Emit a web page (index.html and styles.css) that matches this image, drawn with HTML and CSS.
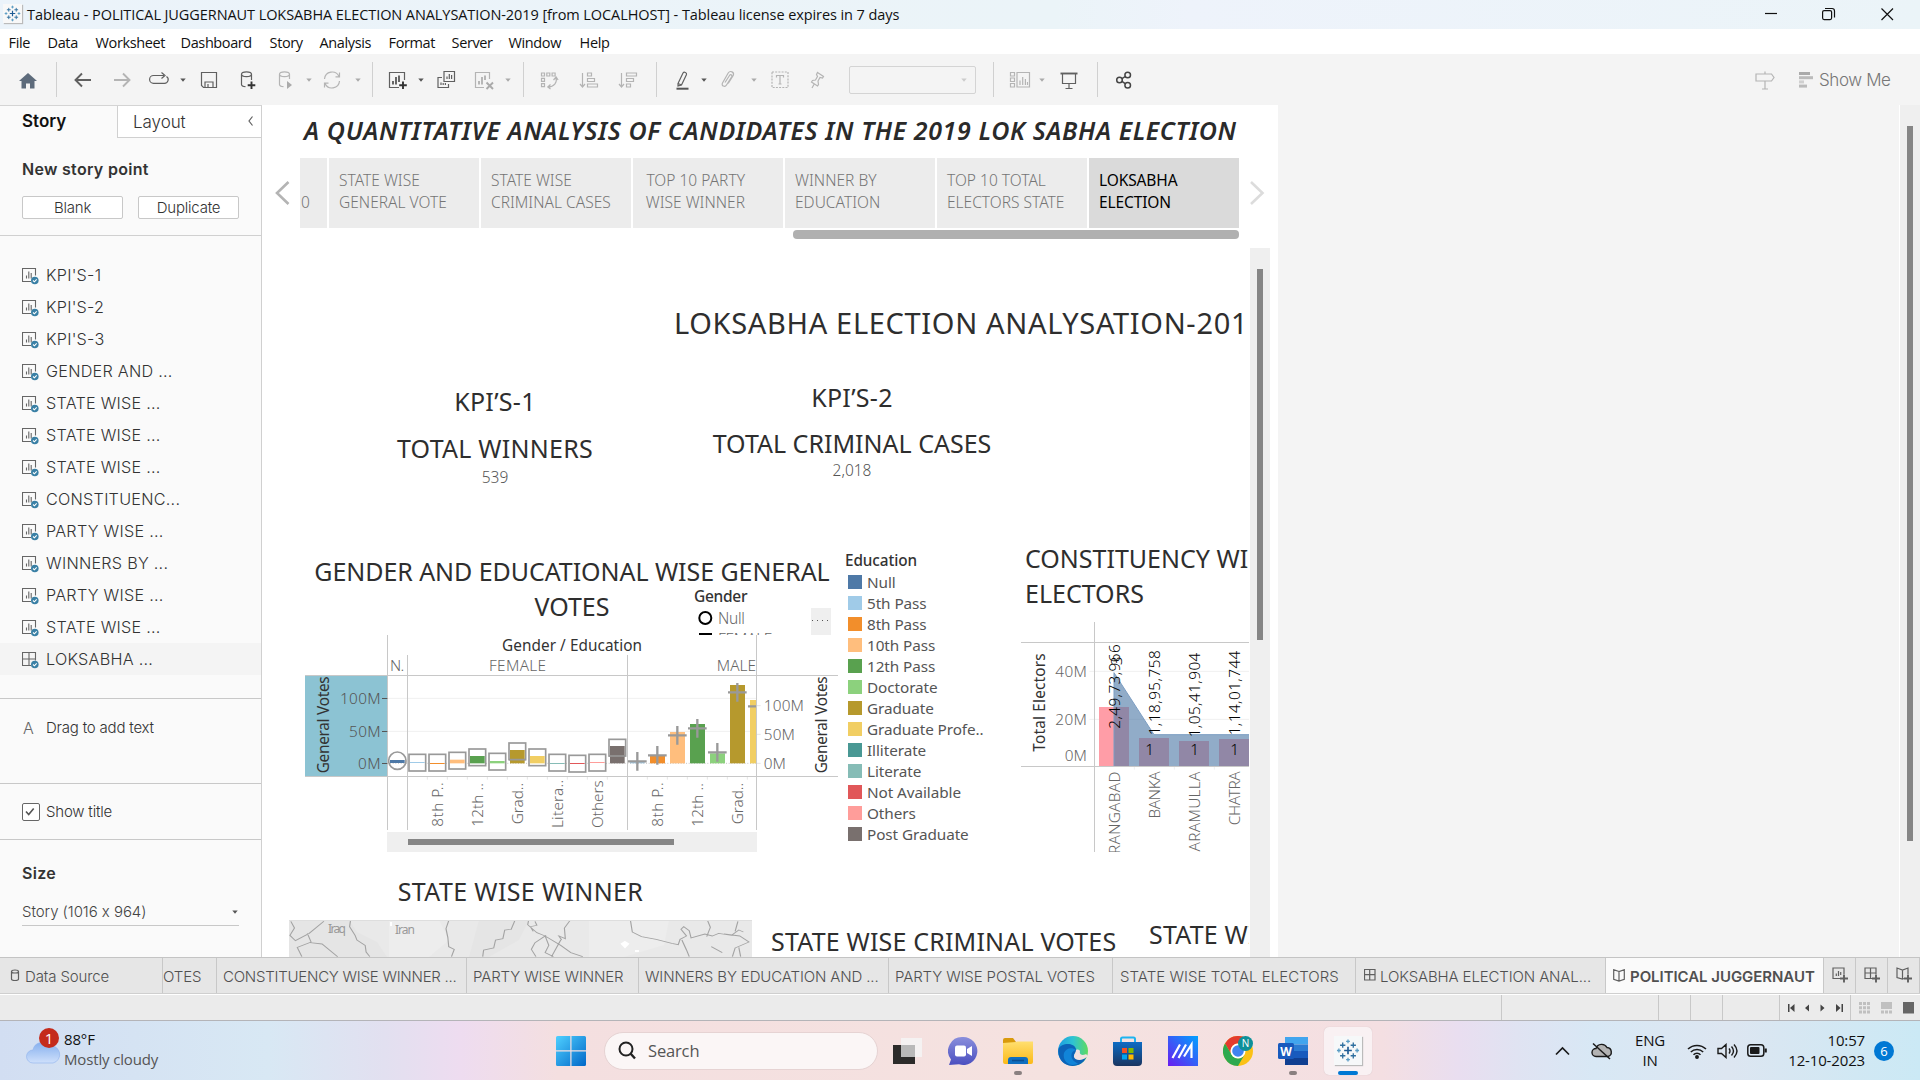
FILE: index.html
```html
<!DOCTYPE html>
<html lang="en">
<head>
<meta charset="utf-8">
<title>Tableau - POLITICAL JUGGERNAUT</title>
<link rel="stylesheet" href="styles.css">
</head>
<body>
<svg class="defs" width="0" height="0">
  <defs>
    <symbol id="tableau" viewBox="0 0 20 20">
      <g fill="none" stroke="#2f6f9f" stroke-width="1.1">
        <path d="M10 6.8v6.4M6.8 10h6.4" stroke="#1f5b94" stroke-width="1.4"/>
        <path d="M5.6 3.4v4.4M3.4 5.6h4.4M14.4 3.4v4.4M12.2 5.6h4.4M5.6 12.2v4.4M3.4 14.4h4.4M14.4 12.2v4.4M12.2 14.4h4.4"/>
        <path d="M10 .8v3.2M8.4 2.4h3.2M10 16v3.2M8.4 17.6h3.2M2.4 8.4v3.2M.8 10h3.2M17.6 8.4v3.2M16 10h3.2" stroke="#5a9cc4"/>
      </g>
    </symbol>
    <symbol id="sheet" viewBox="0 0 18 18">
      <path d="M9 13.5H.5V.5h13v7" fill="none" stroke="#666" stroke-width="1.1"/>
      <path d="M4.5 10.500V7.500M6.800 10.500V3.500M9.200 10.500V5" stroke="#666" stroke-width="1.100"/>
      <circle cx="12.800" cy="12.500" r="3.800" fill="#3a80a5"/>
      <path d="M11 12.500l1.400 1.300 2.300-2.500" fill="none" stroke="#fff" stroke-width="1.100"/>
    </symbol>
    <symbol id="board" viewBox="0 0 18 18">
      <path d="M9 13.500H.5V.5h13v8M.5 7h13M7 .5v13" fill="none" stroke="#666" stroke-width="1.100"/>
      <circle cx="12.800" cy="12.500" r="3.800" fill="#3a80a5"/>
      <path d="M11 12.500l1.400 1.300 2.300-2.500" fill="none" stroke="#fff" stroke-width="1.100"/>
    </symbol>
    <symbol id="caret" viewBox="0 0 8 24"><path d="M1.300 10.600h5.400L4 13.800z" fill="currentColor"/></symbol>
    <linearGradient id="gStart" x1="0" y1="0" x2="1" y2="1"><stop offset="0" stop-color="#4fd0ff"/><stop offset="1" stop-color="#0067c8"/></linearGradient>
    <linearGradient id="gCloud" x1="0" y1="0" x2="0" y2="1"><stop offset="0" stop-color="#86b0ee"/><stop offset="1" stop-color="#cfe0fb"/></linearGradient>
    <linearGradient id="gChat" x1="0" y1="0" x2="0" y2="1"><stop offset="0" stop-color="#8a8fdc"/><stop offset="1" stop-color="#4b4fc0"/></linearGradient>
    <linearGradient id="gFold" x1="0" y1="0" x2="0" y2="1"><stop offset="0" stop-color="#ffdf70"/><stop offset="1" stop-color="#fbb917"/></linearGradient>
    <linearGradient id="gEdge" x1="0" y1="0" x2="1" y2="0"><stop offset="0" stop-color="#1b9de2"/><stop offset=".5" stop-color="#2fc3d2"/><stop offset="1" stop-color="#5edb60"/></linearGradient>
    <linearGradient id="gAsus" x1="1" y1="0" x2="0" y2="1"><stop offset="0" stop-color="#00a2ff"/><stop offset="1" stop-color="#6a1cf0"/></linearGradient>
    <linearGradient id="gStore" x1="0" y1="0" x2="0" y2="1"><stop offset="0" stop-color="#0d6cc4"/><stop offset="1" stop-color="#1a3560"/></linearGradient>
  </defs>
</svg>

<header class="titlebar">
  <span class="app-icon"><svg width="17" height="17"><use href="#tableau"/></svg></span>
  <span class="app-title">Tableau - POLITICAL JUGGERNAUT LOKSABHA ELECTION ANALYSATION-2019 [from LOCALHOST] - Tableau license expires in 7 days</span>
  <svg class="win-btns" width="134" height="29" fill="none" stroke="#111" stroke-width="1.200">
    <path d="M1 13.500h12"/>
    <rect x="58.600" y="10.600" width="9" height="9" rx="1.500"/><path d="M61 8.500h7a2.500 2.500 0 0 1 2.500 2.500v6.500"/>
    <path d="M117.500 8.500l11.500 11.500M129 8.500L117.500 20"/>
  </svg>
</header>

<nav class="menubar">
  <span>File</span><span>Data</span><span>Worksheet</span><span>Dashboard</span><span>Story</span><span>Analysis</span><span>Format</span><span>Server</span><span>Window</span><span>Help</span>
</nav>

<div class="toolbar">
  <svg class="ic" viewBox="0 0 24 24"><path d="M12 5l9 8h-2.500v7.500h-4.500v-5h-4v5H5.500V13H3z" fill="#5d6b7b"/></svg>
  <i class="sep"></i>
  <svg class="ic" viewBox="0 0 24 24"><path d="M20 12H5M11 5.500L4.500 12l6.500 6.500" class="d2"/></svg>
  <svg class="ic" viewBox="0 0 24 24"><path d="M4 12h15M13 5.500l6.500 6.500-6.500 6.500" class="l2"/></svg>
  <svg class="ic" viewBox="0 0 24 24"><path d="M9 7.500H6.500a3.700 3.700 0 0 0 0 7.800h11a3.700 3.700 0 0 0 2-6.800M9 7.500h8M14.500 4.500l3.500 3-3.500 3" class="d"/></svg>
  <svg class="ct dark"><use href="#caret"/></svg>
  <svg class="ic" viewBox="0 0 24 24"><path d="M4.500 4.500h15v15h-13l-2-2zM8 19.500V14h8v5.500M11 16v3.500" class="d"/></svg>
  <svg class="ic" viewBox="0 0 24 24"><path d="M5.500 6.500v10c0 1.200 1.500 2 4 2.200M15.500 6.500v5.500" class="d"/><ellipse cx="10.500" cy="6.200" rx="5" ry="2.400" class="d"/><path d="M15.500 13.500v7.500M11.700 17.200h7.600" stroke="#333" stroke-width="1.900"/></svg>
  <svg class="ic" viewBox="0 0 24 24"><path d="M5.500 6.500v10c0 1.200 1.500 2 4 2.200M15.500 6.500v4.500" class="l"/><ellipse cx="10.500" cy="6.200" rx="5" ry="2.400" class="l"/><path d="M13 13l5 4-5 4z" fill="#aaa"/></svg>
  <svg class="ct"><use href="#caret"/></svg>
  <svg class="ic" viewBox="0 0 24 24"><path d="M4.500 11A7.600 7.600 0 0 1 19 8.500M19.500 13A7.600 7.600 0 0 1 5 15.500M19.500 4.500v4.300h-4M4.500 19.500v-4.300h4" class="l"/></svg>
  <svg class="ct"><use href="#caret"/></svg>
  <i class="sep"></i>
  <svg class="ic" viewBox="0 0 24 24"><path d="M13 19.500H3.500v-15h15V12" class="d"/><path d="M7 16.500V13M10 16.500V9M13 14V7.500" class="d2"/><path d="M17 13.500V21M13.200 17.200h7.600" stroke="#333" stroke-width="1.900"/></svg>
  <svg class="ct dark"><use href="#caret"/></svg>
  <svg class="ic" viewBox="0 0 24 24"><path d="M10 3.500h10.500v10H10zM8 9.500H4v10h10.500V16M13 11V8.500M15.300 11V6M17.600 11V7M7 17v-2.500M9.200 17v-2M11.400 17v-2" class="d"/></svg>
  <svg class="ic" viewBox="0 0 24 24"><path d="M11 19.500H2.500v-15h14V11" class="l"/><path d="M6 16.500V13M9 16.500V9M12 12V7.500" class="l2"/><path d="M13.500 14.500l6.500 6.500M20 14.500L13.500 21" stroke="#aaa" stroke-width="1.900"/></svg>
  <svg class="ct"><use href="#caret"/></svg>
  <i class="sep"></i>
  <svg class="ic" viewBox="0 0 24 24"><path d="M4.500 5h3v3h-3zM9.800 5h3v3h-3zM15.100 5h3v3h-3zM4.500 10.300h3v3h-3zM4.500 15.600h3v3h-3zM19 9.500c1.500 5-2 9.500-8 9.500M16.500 12l2.600-3 2 3M13.500 16.500L10.800 19l2.700 2" class="l"/></svg>
  <svg class="ic" viewBox="0 0 24 24"><path d="M5.500 5v14M3 16l2.500 3L8 16M10.500 5h4v3h-4zM10.500 10.500h7v3h-7zM10.500 16h10v3h-10z" class="l"/></svg>
  <svg class="ic" viewBox="0 0 24 24"><path d="M5.500 5v14M3 16l2.500 3L8 16M10.500 5h10v3h-10zM10.500 10.500h7v3h-7zM10.500 16h4v3h-4z" class="l"/></svg>
  <i class="sep"></i>
  <svg class="ic" viewBox="0 0 24 24"><path d="M7 15.500l5-10.500c1-1.500 4-.5 3.500 1.500l-5 10.500-3.500 1zM7 15.500l3.500 1.500" class="d"/><path d="M5.500 20.700h12" stroke="#555" stroke-width="2"/></svg>
  <svg class="ct dark"><use href="#caret"/></svg>
  <svg class="ic" viewBox="0 0 24 24"><path d="M9 14.500l4.500-7c1-1.500 3-.5 2.200 1.200l-5.200 8.300c-1.500 2.500-5.500 1-4-2L12.200 5c2-3 6.500-.8 5 2.500l-5 8" class="l"/></svg>
  <svg class="ct"><use href="#caret"/></svg>
  <svg class="ic" viewBox="0 0 24 24"><path d="M4 4h16v15.500H4z" class="l" stroke-dasharray="2 1.200"/><path d="M8.500 9.500v-2h7v2M12 7.500v8.500M10.500 16h3" class="l"/></svg>
  <svg class="ic" viewBox="0 0 24 24"><path d="M12.500 4.500l6 4-1 1.500-2.500-.5-2 3.500.5 3.500-1 1.500-6-4 1-1.500 3-.5 2-3.500-1-2zM9.500 15.500L7 20" class="l"/></svg>
  <span class="combo"><svg width="8" height="24"><use href="#caret"/></svg></span>
  <i class="sep"></i>
  <svg class="ic" viewBox="0 0 24 24"><path d="M2.500 4.500h4v3.500h-4zM2.500 10h4v3.500h-4zM2.500 15.500h4v3.500h-4zM9 4.500h12.500v14.500H9zM12 17v-4.500M14.700 17V9M17.400 17v-6M19.500 17v-3" class="l"/></svg>
  <svg class="ct"><use href="#caret"/></svg>
  <svg class="ic" viewBox="0 0 24 24"><path d="M3.500 5.500h17" class="d2"/><path d="M5.500 6v9.500h13V6M12 15.500v4.500M8.500 20.500h7" class="d"/></svg>
  <i class="sep"></i>
  <svg class="ic" viewBox="0 0 24 24"><g class="k"><circle cx="7.500" cy="12" r="2.800"/><circle cx="15.700" cy="7" r="2.800"/><circle cx="15.700" cy="17.200" r="2.800"/><path d="M10 10.700l3.200-2.200M10 13.400l3.200 2.200"/></g></svg>
  <svg class="ic" viewBox="0 0 24 24"><path d="M3 6h15.500l2.500 3.500-2.500 3.500H3zM12 3.500V6M12 13v8M9 21h6" class="l"/></svg>
  <span class="showme"><svg width="15" height="16"><path d="M0 0h11v3H0z" fill="#aaa"/><path d="M0 4.200h14v3H0z" fill="#bbb"/><path d="M0 8.400h5v3H0z" fill="#d0d0d0"/><path d="M0 12.600h8v3H0z" fill="#bbb"/></svg>Show Me</span>
</div>

<main class="workspace">
  <aside class="sidebar">
    <div class="side-tabs"><b>Story</b><span>Layout<svg width="8" height="12"><path d="M5.500 1.500L2 6l3.500 4.500" class="d"/></svg></span></div>
    <section class="new-point">
      <h2>New story point</h2>
      <div class="btns"><button>Blank</button><button>Duplicate</button></div>
    </section>
    <ul class="sheets">
      <li><svg><use href="#sheet"/></svg>KPI'S-1</li>
      <li><svg><use href="#sheet"/></svg>KPI'S-2</li>
      <li><svg><use href="#sheet"/></svg>KPI'S-3</li>
      <li><svg><use href="#sheet"/></svg>GENDER AND ...</li>
      <li><svg><use href="#sheet"/></svg>STATE WISE ...</li>
      <li><svg><use href="#sheet"/></svg>STATE WISE ...</li>
      <li><svg><use href="#sheet"/></svg>STATE WISE ...</li>
      <li><svg><use href="#sheet"/></svg>CONSTITUENC...</li>
      <li><svg><use href="#sheet"/></svg>PARTY WISE ...</li>
      <li><svg><use href="#sheet"/></svg>WINNERS BY ...</li>
      <li><svg><use href="#sheet"/></svg>PARTY WISE ...</li>
      <li><svg><use href="#sheet"/></svg>STATE WISE ...</li>
      <li class="sel"><svg><use href="#board"/></svg>LOKSABHA ...</li>
    </ul>
    <div class="drag"><em>A</em>Drag to add text</div>
    <div class="show-title"><svg width="18" height="18"><rect x=".5" y=".5" width="17" height="17" rx="1.500" fill="#fff" stroke="#666"/><path d="M4 8.500l2.700 3 5-6" fill="none" stroke="#555" stroke-width="1.600"/></svg>Show title</div>
    <div class="size"><h2>Size</h2><div class="select">Story (1016 x 964)<svg width="8" height="24"><use href="#caret"/></svg></div></div>
  </aside>

  <section class="story">
    <h1>A QUANTITATIVE ANALYSIS OF CANDIDATES IN THE 2019 LOK SABHA ELECTION</h1>
    <div class="navigator">
      <svg class="arrow" width="18" height="26"><path d="M14.500 2L3 13l11.500 11" fill="none" stroke="#b4b4b4" stroke-width="2.600"/></svg>
      <div class="strip">
        <div class="points">
          <div class="pt cut"><br>10</div>
          <div class="pt">STATE WISE<br>GENERAL VOTE</div>
          <div class="pt">STATE WISE<br>CRIMINAL CASES</div>
          <div class="pt mid"><span>TOP 10 PARTY<br>WISE WINNER</span></div>
          <div class="pt">WINNER BY<br>EDUCATION</div>
          <div class="pt">TOP 10 TOTAL<br>ELECTORS STATE</div>
          <div class="pt on">LOKSABHA<br>ELECTION</div>
        </div>
        <div class="hbar"></div>
      </div>
      <svg class="arrow" width="18" height="26"><path d="M3 2l11.500 11L3 24" fill="none" stroke="#dcdcdc" stroke-width="2.600"/></svg>
    </div>

    <div class="viewport">
      <div class="dash">
        <h2 class="dash-title">LOKSABHA ELECTION ANALYSATION-2019</h2>
        <div class="kpis">
          <div class="kpi one"><h3>KPI’S-1</h3><h3 class="w">TOTAL WINNERS</h3><p>539</p></div>
          <div class="kpi two"><h3>KPI’S-2</h3><h3>TOTAL CRIMINAL CASES</h3><p>2,018</p></div>
        </div>
        <div class="charts">
          <div class="gender">
            <h3>GENDER AND EDUCATIONAL WISE GENERAL<br>VOTES</h3>
            <div class="shape-legend">
              <b>Gender</b>
              <div><svg width="24" height="21"><circle cx="11.300" cy="10" r="6" fill="none" stroke="#000" stroke-width="2"/></svg>Null</div>
              <div><svg width="24" height="21"><rect x="6" y="5" width="11" height="11" fill="none" stroke="#000" stroke-width="2"/></svg>FEMALE</div>
              <i></i>
            </div>
            <svg class="chart" width="534" height="217" viewBox="42 285 1602 651">
              <rect x="45" y="408" width="247" height="300" fill="#8cc3d3"/>
              <path d="M292 475H1400M292 574H1400" stroke="#f0f0f0" stroke-width="3"/>
              <path d="M292 670H1400" stroke="#c8c8c8" stroke-width="3" stroke-dasharray="3 5"/>
              <path d="M412 710v9M472 710v9M532 710v9M592 710v9M652 710v9M712 710v9M772 710v9M832 710v9M892 710v9M952 710v9M1072 710v9M1132 710v9M1192 710v9M1252 710v9M1312 710v9M1372 710v9M1400 497h12M1400 583h12M1400 670h12" stroke="#e6e6e6" stroke-width="3"/>
              <rect x="300" y="660" width="44" height="9" fill="#4e79a7"/>
              <g fill="none" stroke="#999" stroke-width="5">
                <g fill="#fff"><rect x="357" y="643" width="50" height="50"/><rect x="417" y="643" width="50" height="50"/><rect x="477" y="637" width="50" height="50"/><rect x="537" y="627" width="50" height="50"/><rect x="597" y="640" width="50" height="50"/><rect x="657" y="609" width="50" height="50"/><rect x="717" y="627" width="50" height="50"/><rect x="777" y="643" width="50" height="50"/><rect x="837" y="646" width="50" height="50"/><rect x="897" y="643" width="50" height="50"/><rect x="957" y="598" width="50" height="50"/></g>
              </g>
              <rect x="360" y="666" width="44" height="3" fill="#a0cbe8"/><rect x="420" y="669" width="44" height="3" fill="#f28e2b"/><rect x="480" y="659" width="44" height="11" fill="#ffbe7d"/><rect x="540" y="648" width="44" height="22" fill="#59a14f"/><rect x="600" y="663" width="44" height="7" fill="#8cd17d"/><rect x="660" y="630" width="44" height="40" fill="#b6992d"/><rect x="720" y="648" width="44" height="22" fill="#f1ce63"/><rect x="780" y="669" width="44" height="3" fill="#86bcb6"/><rect x="840" y="669" width="44" height="3" fill="#e15759"/><rect x="900" y="666" width="44" height="3" fill="#ff9d9a"/><rect x="960" y="618" width="44" height="52" fill="#79706e"/>
              <path d="M1020 664h44v6h-44z" fill="#a0cbe8"/><rect x="1080" y="648" width="45" height="22" fill="#f28e2b"/><rect x="1140" y="576" width="45" height="94" fill="#ffbe7d"/><rect x="1200" y="552" width="45" height="118" fill="#59a14f"/><rect x="1260" y="640" width="45" height="30" fill="#8cd17d"/><rect x="1320" y="435" width="45" height="235" fill="#b6992d"/><rect x="1380" y="480" width="20" height="190" fill="#f1ce63"/>
              <g fill="none" stroke="#999" stroke-width="5">
                <circle cx="322" cy="662" r="26"/><path d="M657 659h50M957 648h50"/>
                <path stroke-width="7" d="M1014 664h56M1042 636v56M1074 646h56M1102 618v56M1134 586h56M1162 558v56M1194 565h56M1222 537v56M1254 637h56M1282 609v56M1314 457h56M1342 429v56M1374 499h26"/>
              </g>
              <path d="M45 406.500H1644M45 709.500H1644M292.500 285V870M352.500 345V870M1012.500 345V870M1399.500 285V870" stroke="#c8c8c8" stroke-width="3"/>
              <path d="M276 475.500h16M276 574.500h16M276 670.500h16" stroke="#555" stroke-width="3"/>
              <g class="axis" text-anchor="end"><text x="271" y="492" fill="#555" textLength="121">100M</text><text x="271" y="590" fill="#555" textLength="94">50M</text><text x="271" y="687" fill="#555" textLength="67">0M</text></g>
              <g class="axis"><text x="1421" y="514" textLength="120">100M</text><text x="1421" y="600" textLength="93">50M</text><text x="1421" y="687" textLength="66">0M</text>
                <text x="300" y="393" textLength="42">N.</text><text x="597" y="393" textLength="170">FEMALE</text><text x="1280" y="393" textLength="117">MALE</text></g>
              <text class="field" x="636" y="333" textLength="420">Gender / Education</text>
              <text class="axis dk" transform="translate(118 700) rotate(-90)" textLength="290">General Votes</text>
              <text class="axis dk" transform="translate(1610 700) rotate(-90)" textLength="290">General Votes</text>
              <g class="axis">
                <text transform="translate(460 860) rotate(-90)" textLength="132">8th P..</text><text transform="translate(580 860) rotate(-90)" textLength="130">12th ..</text><text transform="translate(700 853) rotate(-90)" textLength="124">Grad..</text><text transform="translate(820 864) rotate(-90)" textLength="144">Litera..</text><text transform="translate(940 864) rotate(-90)" textLength="142">Others</text><text transform="translate(1120 860) rotate(-90)" textLength="132">8th P..</text><text transform="translate(1240 860) rotate(-90)" textLength="130">12th ..</text><text transform="translate(1360 853) rotate(-90)" textLength="124">Grad..</text>
              </g>
              <rect x="291" y="876" width="1110" height="60" fill="#efefef"/><rect x="354" y="897" width="798" height="18" fill="#868686"/>
            </svg>
          </div>
          <ul class="legend">
            <li class="head">Education</li>
            <li><i class="c1"></i>Null</li><li><i class="c2"></i>5th Pass</li><li><i class="c3"></i>8th Pass</li><li><i class="c4"></i>10th Pass</li><li><i class="c5"></i>12th Pass</li><li><i class="c6"></i>Doctorate</li><li><i class="c7"></i>Graduate</li><li><i class="c8"></i>Graduate Profe..</li><li><i class="c9"></i>Illiterate</li><li><i class="c10"></i>Literate</li><li><i class="c11"></i>Not Available</li><li><i class="c12"></i>Others</li><li><i class="c13"></i>Post Graduate</li>
          </ul>
          <div class="constituency">
            <h3>CONSTITUENCY WISE<br>ELECTORS</h3>
            <svg class="chart" width="228" height="230" viewBox="63 276 684 690">
              <path d="M268 424H747M268 568H747M403 710v9M523 710v9M643 710v9" stroke="#f0f0f0" stroke-width="3"/>
              <path d="M297 531h90v177h-90zM417 624h90v84h-90zM537 633h90v75h-90zM657 627h90v81h-90z" fill="#ff9da7"/>
              <path d="M342 428L462 614H747V708H342z" fill="#4e79a7" fill-opacity=".62"/>
              <path d="M342 708V428L462 614H747" fill="none" stroke="#7b9dc2" stroke-width="3"/>
              <path d="M63 337.500H747M63 709.500H747M283.500 276V966" stroke="#c8c8c8" stroke-width="3"/>
              <g class="axis" text-anchor="end"><text x="260" y="441" textLength="94">40M</text><text x="260" y="585" textLength="94">20M</text><text x="260" y="693" textLength="66">0M</text></g>
              <text class="axis dk" transform="translate(135 665) rotate(-90)" textLength="294">Total Electors</text>
              <g class="axis bk">
                <text transform="translate(359 596) rotate(-90)" textLength="253">2,49,73,966</text><text transform="translate(367 406) rotate(-90)">3</text>
                <text transform="translate(479 616) rotate(-90)" textLength="255">1,18,95,758</text><text transform="translate(599 622) rotate(-90)" textLength="254">1,05,41,904</text><text transform="translate(719 616) rotate(-90)" textLength="254">1,14,01,744</text>
                <text x="436" y="676">1</text><text x="571" y="676">1</text><text x="691" y="676">1</text>
              </g>
              <g class="axis" text-anchor="end"><text class="wide" transform="translate(359 724) rotate(-90)">AURANGABAD</text><text transform="translate(479 725) rotate(-90)">BANKA</text><text class="wide" transform="translate(599 724) rotate(-90)">BARAMULLA</text><text transform="translate(719 725) rotate(-90)">CHATRA</text></g>
            </svg>
          </div>
        </div>
        <div class="bottom">
          <div class="winner">
            <h3>STATE WISE WINNER</h3>
            <svg width="463" height="37" viewBox="0 0 463 37">
              <rect width="463" height="37" fill="#e9e9e9"/>
              <path d="M0 0h60l8 12 20 10 10 15H0zM190 0h50l-10 20-30 17h-20z" fill="#e5e5e5"/><path d="M100 0h50l10 20-20 17h-40zM300 0h80l-5 25-40 12h-35z" fill="#ededed"/>
              <g transform="scale(.459 .3333) translate(-20 -180)" fill="none" stroke="#a3a3a3" stroke-width="2.500">
                <path d="M24 184l8 20-10 22 12 16 30-22 32-36M60 220l8 26-30 16 10 28M66 248l26 4 34 38M154 182l-2 18 12 26 4 14 18 16 2 20 8 14M368 182l-6 24 4 26 2 28 12 8-6 22M512 182l-8 26-14 2-4 26-16 4-4 24-22 6-2 20M542 182l-2 12 20 24 18 10 34 28 22 22 26 12M556 184l4 12-14 4 6 14M632 182l-12 22 2 32-14-8 6 12M580 226l-24 22-8 20 10 22M578 228l8 28-8 22 18 12M612 240l-20 50M764 182l4 34 20 14 32 8 34 12 14 4 4-16 14-10-12-20 6-8 12 12 4 22 30-12 16 6 14-8 28 6 16-16 10 6M876 240l10 30 6 20M932 182l6 20-8 28M998 184l-6 30M968 222l34 6 20 18-30 18-6 26M940 260l24 18M1000 262l4 28"/>
              </g>
              <path d="M102 2v4M336 22l3 2-3 3-3-3zM346 31h4" fill="#fff" stroke="#fff" stroke-width="2"/>
              <text x="39" y="12.500" textLength="18">Iraq</text><text x="106" y="13.500" textLength="20">Iran</text>
              <path d="M0 .5h463" stroke="#dedede"/>
            </svg>
          </div>
          <h3 class="crim">STATE WISE CRIMINAL VOTES</h3>
          <h3 class="statew">STATE WISE</h3>
        </div>
      </div>
      <div class="vtrack"><i></i></div>
    </div>
  </section>
  <div class="blank"></div>
  <div class="vtrack outer"><i></i></div>
</main>

<div class="tabs">
  <div class="tab ds"><svg width="11" height="14"><path d="M1.500 3.500v7.500c0 2 7 2 7 0V3.500M1.500 3.500c0-2 7-2 7 0s-7 2-7 0" class="d"/></svg>Data Source</div>
  <div class="tab votes">OTES</div>
  <div class="tab w3">CONSTITUENCY WISE WINNER ...</div>
  <div class="tab w4">PARTY WISE WINNER</div>
  <div class="tab w5">WINNERS BY EDUCATION AND ...</div>
  <div class="tab w6">PARTY WISE POSTAL VOTES</div>
  <div class="tab w7">STATE WISE TOTAL ELECTORS</div>
  <div class="tab w8"><svg width="12" height="12"><path d="M.5 .5h10.500v10.500H.5zM.5 5.700h10.500M5.700 .5v10.500" class="d"/></svg>LOKSABHA ELECTION ANAL...</div>
  <div class="tab w9"><svg width="12" height="13"><path d="M6 2.500L.7 .7v9.500L6 12l5.300-1.800V.7zV12" class="d"/></svg>POLITICAL JUGGERNAUT</div>
  <div class="tab add"><svg width="17" height="16"><path d="M8 11.500H1V1h11v6M4.300 9V6.500M6.500 9V4M8.700 8V5" class="d"/><path d="M12 7.500v8M8 11.500h8" class="d2"/></svg></div>
  <div class="tab add"><svg width="17" height="16"><path d="M8 11.500H1V1h11v6M1 6h11M6.500 1v10.500" class="d"/><path d="M12 7.500v8M8 11.500h8" class="d2"/></svg></div>
  <div class="tab add"><svg width="17" height="16"><path d="M8 11.500L6.500 12 1 10.500V1l5.500 2L12 1v6M6.500 3v9" class="d"/><path d="M12 7.500v8M8 11.500h8" class="d2"/></svg></div>
</div>

<div class="status">
  <i class="s1"></i><i class="s2"></i><i class="s3"></i><i class="s3"></i><i class="s4"></i>
  <div class="pager"><svg width="60" height="10" fill="#444"><path d="M1 1h1.500v8H1zM7.500 1v8L3 5zM22 1.500v7L18 5zM33.500 1.500v7l4-3.500zM49 1v8l4.500-4zM54.500 1H56v8h-1.500z"/></svg></div>
  <svg width="56" height="12"><path d="M0 0h3v3H0zM4 0h3v3H4zM8 0h3v3H8zM0 4.300h3v3H0zM4 4.300h3v3H4zM8 4.300h3v3H8zM0 8.600h3v3H0zM4 8.600h3v3H4zM8 8.600h3v3H8zM22 0h11v7H22zM22 8.600h3v3h-3zM26 8.600h3v3h-3zM30 8.600h3v3h-3z" fill="#c0c0c0"/><path d="M44 0h11v11.500H44z" fill="#666"/></svg>
</div>

<footer class="taskbar">
  <div class="weather">
    <svg width="40" height="42"><circle cx="25" cy="22" r="5" fill="#f7830f"/><path d="M8 35a6.500 6.500 0 0 1 0-13 9 9 0 0 1 16-4 8.500 8.500 0 0 1 4 17z" fill="url(#gCloud)" stroke="#8fb2ec" stroke-width=".6"/><circle cx="24" cy="10" r="10" fill="#c42b1c"/><text x="24" y="15.500" text-anchor="middle" fill="#fff">1</text></svg>
    <p>88°F<br><span>Mostly cloudy</span></p>
  </div>
  <svg class="start" width="30" height="30"><path d="M0 1.500Q0 0 1.500 0H14.300V14.300H0zM15.500 0H28.500Q30 0 30 1.500V14.300H15.500zM0 15.500H14.300V30H1.500Q0 30 0 28.500zM15.500 15.500H30V28.500Q30 30 28.500 30H15.500z" fill="url(#gStart)"/></svg>
  <div class="search"><svg width="20" height="20"><circle cx="9" cy="8" r="6.500" fill="none" stroke="#222" stroke-width="2"/><path d="M13.500 12.500L18 17.500" stroke="#222" stroke-width="2.400"/></svg>Search</div>
  <div class="apps">
    <div class="app"><svg width="30" height="30"><path d="M0 9h22v19H0z" fill="#2c2b2a"/><path d="M8 2h21v19H8z" fill="#f4f4f4" fill-opacity=".85"/><path d="M8 9h14v12H8z" fill="#b9b9b9"/></svg></div>
    <div class="app"><svg width="30" height="30"><path d="M15 1a14 14 0 1 1-4 27.300L1 29l2-5.500A14 14 0 0 1 15 1z" fill="url(#gChat)"/><rect x="7" y="9.500" width="11" height="11" rx="2" fill="#fff"/><path d="M19 13l5-3v10l-5-3z" fill="#fff"/></svg></div>
    <div class="app run"><svg width="30" height="30"><path d="M0 4q0-2 2-2h8l3 4v8H0z" fill="#d99a0c"/><path d="M0 7l13-1 1-.500H30V26q0 2-2 2H2q-2 0-2-2z" fill="url(#gFold)"/><path d="M5 28v-4q0-3 3-3h14q3 0 3 3v4z" fill="#0f6fc0"/><path d="M9 24.500h12" stroke="#0a4f92" stroke-width="1.600"/></svg></div>
    <div class="app"><svg width="30" height="30"><circle cx="15" cy="15" r="15" fill="url(#gEdge)"/><path d="M.5 13C3 7 16 6 18 13c1 4-2 4-2 7 0 4 8 5 12 1.500C24 32 7 33 2 22.500A15 15 0 0 1 .5 13z" fill="#0c63b8"/><path d="M6 17c2-5 8-6 12-3-6 1-7 10 2 13.500C12 32 4 25 6 17z" fill="#1184d8"/><path d="M18 14c0 3-2.500 4-2 7 1 3.500 8 4 12 .5 3-1 1-4-1-3-3 1-6 0-5-3 0-1.500-2-2.500-4-1.500z" fill="#f3dfe0"/></svg></div>
    <div class="app"><svg width="30" height="30"><path d="M8 7V3q0-1.500 1.500-1.500h11Q22 1.500 22 3v4" fill="none" stroke="#1fb4f0" stroke-width="2"/><path d="M0 6h29v20q0 4-4 4H4q-4 0-4-4z" fill="url(#gStore)"/><path d="M9 12h5v5H9z" fill="#f25022"/><path d="M15.500 12h5v5h-5z" fill="#7fba00"/><path d="M9 18.500h5v5H9z" fill="#00a4ef"/><path d="M15.500 18.500h5v5h-5z" fill="#ffb900"/></svg></div>
    <div class="app"><svg width="30" height="30"><path d="M0 0h30v30H0z" fill="url(#gAsus)"/><path d="M4.500 22L12 8.500M10.500 22L18 8.500M16 20.500l7.500-12V22" fill="none" stroke="#fff" stroke-width="2.200"/></svg></div>
    <div class="app"><svg width="30" height="30"><circle cx="15" cy="15" r="15" fill="#fbc116"/><path d="M2 7.500A15 15 0 0 1 28 7.500H15A7.500 7.500 0 0 0 8.500 18.500z" fill="#e33b2e"/><path d="M2 7.500A15 15 0 0 0 15 30l6.500-11.300A7.500 7.500 0 0 1 8.500 18.500z" fill="#2da94f"/><circle cx="15" cy="15" r="7.500" fill="#fff"/><circle cx="15" cy="15" r="5.800" fill="#3f83f0"/><circle cx="22.500" cy="7.500" r="7.500" fill="#0d9099"/><text x="22.500" y="11" text-anchor="middle" fill="#fff" class="s10">N</text></svg></div>
    <div class="app run"><svg width="30" height="30"><path d="M7 1h23v7.500H7z" fill="#41a5ee"/><path d="M7 8.500h23V15H7z" fill="#2b7cd3"/><path d="M7 15h23v7H7z" fill="#185abd"/><path d="M7 22h23v7H7z" fill="#103f91"/><rect y="7" width="16" height="16" rx="1.500" fill="#185abd"/><text x="8" y="19.500" text-anchor="middle" fill="#fff" class="s12">W</text></svg></div>
    <div class="app cur"><span><svg width="24" height="25"><use href="#tableau"/></svg></span></div>
  </div>
  <div class="tray">
    <svg width="15" height="10" class="t1"><path d="M1 8.500L7.500 2 14 8.500" fill="none" stroke="#1a1a1a" stroke-width="1.700"/></svg>
    <svg width="22" height="18" class="t2"><path d="M5 14.500a4 4 0 0 1 0-8 6 6 0 0 1 11-1 4.600 4.600 0 0 1 1 9z" fill="#b3b3b3" stroke="#1a1a1a" stroke-width="1.400"/><path d="M2 1.500l17 15.500" stroke="#1a1a1a" stroke-width="1.500"/></svg>
    <p class="lang">ENG<br>IN</p>
    <svg width="20" height="16" class="t3" fill="none" stroke="#1a1a1a" stroke-width="1.500"><path d="M1 6a13 13 0 0 1 18 0M3.800 9a9 9 0 0 1 12.400 0M6.500 11.800a5 5 0 0 1 7 0"/><circle cx="10" cy="14" r="1.200" fill="#1a1a1a"/></svg>
    <svg width="21" height="16" class="t4" fill="none" stroke="#1a1a1a" stroke-width="1.400"><path d="M1 5.500h3.500L9 1.500v13l-4.500-4H1zM12 5.500q2 2.500 0 5M14.500 3.500q4 4.500 0 9M17 1.500q6 6.500 0 13"/></svg>
    <svg width="21" height="13" class="t5"><rect x=".8" y=".8" width="16" height="11.400" rx="2.800" fill="none" stroke="#1a1a1a" stroke-width="1.500"/><rect x="3" y="3" width="9.500" height="7" rx="1" fill="#1a1a1a"/><path d="M18.700 4.500v4" stroke="#1a1a1a" stroke-width="2.200"/></svg>
    <p class="clock">10:57<br>12-10-2023</p>
    <span class="count">6</span>
  </div>
</footer>
</body>
</html>
```
FILE: styles.css
```css
* { box-sizing: border-box; margin: 0; padding: 0; }
body { width: 1920px; height: 1080px; overflow: hidden; display: flex; flex-direction: column; background: #fff; color: #333; font-family: Inter, "Liberation Sans", sans-serif; white-space: nowrap; }
svg { display: block; flex: none; }
ul { list-style: none; }
.defs { position: absolute; }
.d, .d2, .l, .l2, .k { fill: none; }
.d, .d2 { stroke: #606060; stroke-width: 1.2; }
.l, .l2 { stroke: #b4b4b4; stroke-width: 1.2; }
.d2, .l2 { stroke-width: 1.9; }
.k { stroke: #444; stroke-width: 1.5; }

.titlebar { height: 29px; flex: none; display: flex; align-items: center; padding-left: 3px; background: linear-gradient(90deg, #ebf3fa, #ebf4f8 55%, #eef3fb 62%, #ebf4f8); color: #111; font: 14.5px "Open Sans", sans-serif; letter-spacing: -.08px; }
.app-icon { width: 19px; height: 19px; padding: 1px; background: #f8f8f8; box-shadow: 1px 1px 1px #bbb; margin-top: -2px; }
.app-title { margin-left: 5px; }
.win-btns { margin-left: auto; margin-right: 22px; }

.menubar { height: 25px; flex: none; display: grid; grid-template-columns: 39px 48px 85px 89px 50px 69px 63px 57px 71px 60px; padding-left: 8.6px; background: #fff; color: #111; font: 14.5px/27px "Open Sans", sans-serif; letter-spacing: -.4px; }

.toolbar { height: 51px; flex: none; background: #f4f4f4; display: grid; align-items: center; justify-items: start; padding-left: 16px; grid-template-columns: 40px 15px 39px 37px 32px 18px 39px 38px 31px 15px 34px 18px 14px 31px 17px 39px 31px 19px 14px 40px 39px 40px 15px 29px 16px 34px 18px 37px 44px 144px 15px 30px 19px 40px 15px 641px 46px 121px; }
.ic { width: 24px; height: 24px; }
.ct { width: 8px; height: 24px; color: #aaa; }
.dark { color: #555; }
.sep { width: 1px; height: 35px; background: #d0d0d0; }
.combo { width: 127px; height: 28px; border: 1px solid #d4d4d4; border-radius: 2px; display: flex; align-items: center; justify-content: flex-end; padding-right: 7px; color: #ccc; }
.showme { display: flex; align-items: center; gap: 5px; font-size: 17px; font-weight: 300; letter-spacing: -.4px; color: #777; }

.workspace { height: 852px; flex: none; display: flex; }
.sidebar { width: 262px; background: #fafafa; border-right: 1px solid #d0d0d0; border-top: 1px solid #d4d4d4; }
.side-tabs { display: flex; height: 32px; color: #111; font-size: 17px; line-height: 31px; }
.side-tabs b { width: 117px; padding-left: 22px; font-weight: 600; }
.side-tabs span { flex: 1; display: flex; justify-content: space-between; padding: 0 6px 0 15px; border-left: 1px solid #d0d0d0; border-bottom: 1px solid #d0d0d0; letter-spacing: -.05px; font-weight: 350; color: #333; background: #fff; line-height: 32px; }
.side-tabs svg { margin-top: 9px; }
.new-point { height: 98px; padding: 20px 22px 0; border-bottom: 1px solid #d0d0d0; }
.sidebar h2 { font-size: 16px; font-weight: 600; line-height: 22px; letter-spacing: .3px; }
.btns { display: flex; gap: 15px; margin-top: 16px; }
.btns button { width: 101px; height: 23px; border: 1px solid #c8c8c8; border-radius: 2px; background: #fff; color: #333; font: 350 15px/20px Inter, sans-serif; letter-spacing: -.2px; }
.sheets { padding: 23px 0; height: 463px; border-bottom: 1px solid #c8c8c8; }
.sheets li { display: flex; align-items: center; height: 32px; padding-left: 22px; font-size: 16.2px; font-weight: 340; letter-spacing: .25px; line-height: 30px; padding-bottom: 1px; }
.sheets svg { width: 18px; height: 18px; margin-right: 6px; margin-top: 4px; }
.sheets .sel { background: #f4f4f4; }
.drag, .show-title { display: flex; padding-left: 22px; border-bottom: 1px solid #c8c8c8; font-size: 15px; font-weight: 350; letter-spacing: -.2px; }
.drag { height: 85px; padding-top: 18px; line-height: 22px; }
.drag em { width: 24px; font-style: normal; color: #666; font-size: 16px; padding-left: 1px; }
.show-title { height: 56px; align-items: center; gap: 6px; }
.size { padding: 22px 22px 0; }
.sidebar .size h2 { font-size: 16px; }
.select { margin-top: 14px; height: 28px; border-bottom: 1px solid #c8c8c8; display: flex; align-items: center; justify-content: space-between; font-size: 15px; font-weight: 350; letter-spacing: -.05px; color: #444; }
.select svg { color: #555; }

.story { width: 1016px; background: #fff; font-family: "Noto Sans", sans-serif; display: flex; flex-direction: column; overflow: hidden; }
.story h1 { height: 53px; padding-left: 42px; font-size: 25px; font-style: italic; font-weight: 600; line-height: 50px; letter-spacing: .63px; color: #2a2a2a; }
.navigator { display: flex; height: 90px; padding-left: 12px; }
.arrow { margin-top: 22px; }
.strip { width: 939px; margin: 0 9px 0 8px; }
.points { display: flex; gap: 2px; height: 70px; }
.pt { width: 150px; flex: none; padding: 11px 0 0 10px; background: #ececec; color: #757575; font-size: 15.5px; font-weight: 340; line-height: 22px; letter-spacing: .02px; }
.pt.cut { width: 27px; padding-left: 0; overflow: hidden; direction: rtl; padding-right: 17px; }
.pt.mid { text-align: right; padding-right: 38px; padding-left: 0; }
.pt.on { background: #dadada; color: #000; font-weight: 400; letter-spacing: -.12px; }
.hbar { width: 446px; height: 9px; margin: 2px 0 0 auto; border-radius: 4px; background: #b0b0b0; }

.viewport { height: 709px; display: flex; }
.dash { width: 987px; height: 709px; overflow: hidden; }
.vtrack { width: 20px; background: #efefef; margin-left: 1px; padding: 21px 0 0 7px; }
.vtrack i { display: block; width: 6px; height: 371px; background: #868686; }
.dash h2, .dash h3 { font-weight: 430; color: #2e2e2e; }
.dash h3 { font-size: 25px; }
.dash .dash-title { height: 96px; padding: 54px 0 0 412px; font-size: 29px; line-height: 41px; letter-spacing: .67px; }
.kpis { display: grid; grid-template-columns: 384px 330px; height: 195px; padding-left: 41px; text-align: center; }
.kpi { padding-top: 35px; }
.kpi h3 { line-height: 36px; margin: 0 -20px 10px; letter-spacing: .3px; }
.kpi h3 + h3 { margin-bottom: 0; letter-spacing: 0; }
.kpi h3.w { letter-spacing: .25px; }
.kpi p { font-size: 15.5px; line-height: 18px; color: #555; font-weight: 350; }
.kpi.one { padding-top: 39px; }
.kpi.one h3 { margin-bottom: 11px; }
.kpi.one h3 + h3 { margin-bottom: 0; }
.kpi.one p { line-height: 22px; }
.charts { display: grid; grid-template-columns: 542px 175px 228px; height: 320px; padding-left: 42px; }
.gender { position: relative; width: 534px; padding-top: 15px; }
.gender h3 { text-align: center; line-height: 35px; margin: 0 -1px 0 1px; letter-spacing: -.06px; }
.gender .chart { margin-top: 11px; }
.shape-legend { position: absolute; left: 390px; top: 46px; width: 138px; height: 50px; overflow: hidden; font-size: 15.5px; letter-spacing: -.3px; color: #666; font-weight: 350; }
.shape-legend b { display: block; height: 23px; line-height: 23px; font-weight: 500; color: #333; }
.shape-legend div { display: flex; height: 21px; line-height: 21px; }
.shape-legend i { position: absolute; right: 1px; top: 23px; width: 20px; height: 27px; background: #efefef; }
.shape-legend i::after { content: ""; position: absolute; left: 1px; width: 17px; height: 1px; top: 12px; background: repeating-linear-gradient(90deg, #555 0 1px, transparent 1px 5px); }
.legend { padding-top: 10px; font-size: 15.3px; color: #555; font-weight: 370; }
.legend li { display: flex; align-items: center; height: 21px; letter-spacing: -.08px; padding-left: 2px; }
.legend .head { height: 22px; padding-left: 0; margin-left: -1px; font-weight: 500; color: #333; }
.legend i { width: 14px; height: 14px; margin-right: 5px; }
.c1 { background: #4e79a7; } .c2 { background: #a0cbe8; } .c3 { background: #f28e2b; } .c4 { background: #ffbe7d; }
.c5 { background: #59a14f; } .c6 { background: #8cd17d; } .c7 { background: #b6992d; } .c8 { background: #f1ce63; }
.c9 { background: #499894; } .c10 { background: #86bcb6; } .c11 { background: #e15759; } .c12 { background: #ff9d9a; } .c13 { background: #79706e; }
.constituency { padding-top: 2px; }
.constituency h3 { padding-left: 4px; line-height: 35px; }
.constituency .chart { margin-top: 11px; }
.axis { font-size: 46px; font-weight: 300; fill: #666; letter-spacing: -1px; }
.dk { fill: #333; font-weight: 400; }
.bk { fill: #000; letter-spacing: 0; }
.wide { letter-spacing: 1px; }
.field { font-size: 46px; font-weight: 450; fill: #333; }
.bottom { display: grid; grid-template-columns: 482px 377px 1fr; padding-left: 27px; height: 98px; }
.winner { padding-top: 14px; width: 463px; }
.winner h3 { text-align: center; line-height: 36px; margin-bottom: 11px; letter-spacing: .35px; }
.winner text { font: 12px "Noto Sans", sans-serif; fill: #999; }
.crim { padding-top: 64px; line-height: 36px; letter-spacing: .18px; }
.statew { padding-top: 57px; line-height: 36px; letter-spacing: .2px; padding-left: 1px; }
.blank { flex: 1; background: #f4f4f4; }
.outer { width: 21px; margin: 0; border-left: 1px solid #fff; }
.outer i { height: 715px; }

.tabs { height: 37px; flex: none; display: flex; border-top: 1px solid #c4c4c4; border-bottom: 1px solid #cfcfcf; background: #e6e6e6; margin-bottom: 1px; }
.tab { display: flex; align-items: center; padding: 1px 0 0 6px; border-right: 1px solid #c8c8c8; font-size: 15px; font-weight: 350; letter-spacing: -.13px; color: #505050; overflow: hidden; flex: none; }
.ds { width: 163px; padding-left: 10px; gap: 4px; }
.votes { width: 54px; padding-left: 0; }
.w3 { width: 250px; letter-spacing: -.24px; } .w4 { width: 172px; } .w5 { width: 250px; } .w6 { width: 224px; } .w7 { width: 243px; padding-left: 7px; letter-spacing: .03px; }
.w8 { width: 250px; padding-left: 8px; gap: 4px; } .w9 { width: 218px; padding-left: 7px; gap: 5px; background: #fafafa; font-weight: 600; letter-spacing: -.05px; }
.tab svg { margin-top: -2px; }
.add { width: 32px; padding-left: 8px; }
.status { height: 26px; flex: none; display: flex; align-items: center; background: #ebebeb; border-bottom: 1px solid #b4b4b8; }
.status i, .pager { height: 25px; border-right: 1px solid #c8c8c8; }
.s1 { width: 1502px; } .s2 { width: 157px; } .s3 { width: 32px; } .s4 { width: 57px; }
.pager { width: 71px; display: flex; align-items: center; padding-left: 7px; margin-right: 8px; }

.taskbar { flex: 1; display: flex; align-items: center; background: linear-gradient(90deg, #d2def2, #d8e8f4 14%, #e2e0f0 20%, #eedcf0 24%, #f4dfe0 29%, #f5e2e0 55%, #f4dfe2 72%, #e9def0 76%, #e0e3f2 79%, #d8e8f5 83%, #dde6f1 90%, #cbe9f5); color: #111; font: 15px/20px "Open Sans", sans-serif; letter-spacing: -.15px; }
.weather { width: 556px; padding-left: 25px; display: flex; margin-top: -2px; }
.weather svg { margin: -1px -1px 0 0; }
.weather p span { color: #555; }
.search { width: 274px; height: 38px; margin: 0 2px 0 18px; border-radius: 19px; background: #fbf6f6; border: 1px solid #e6d3d3; display: flex; align-items: center; gap: 11px; padding-left: 12px; font-size: 16.5px; color: #555; }
.apps { display: flex; }
.app { position: relative; width: 55px; height: 48px; display: flex; align-items: center; justify-content: center; }
.run::after { content: ""; position: absolute; bottom: 0; width: 8px; height: 4px; border-radius: 2px; background: #8a8080; }
.cur { width: 48px; margin-left: 4px; background: #f9f1f3; border-radius: 5px; box-shadow: 0 0 1px #ccb8bc; }
.cur span { background: #f6f8f9; padding: 2px; box-shadow: 1px 1px 1px #bbb; }
.cur::after { content: ""; position: absolute; bottom: 0; width: 20px; height: 4px; border-radius: 2px; background: #0078d4; }
.s10 { font-size: 10px; } .s12 { font-size: 12px; font-weight: 700; }
.tray { margin-left: auto; display: flex; align-items: center; width: 365px; }
.t2 { margin-left: 21px; }
.lang { width: 40px; text-align: center; margin: -1px 0 0 17px; }
.t3 { margin-left: 17px; } .t4 { margin-left: 10px; } .t5 { margin-left: 9px; }
.clock { width: 97px; text-align: right; margin-top: -2px; }
.count { width: 20px; height: 20px; margin-left: 9px; border-radius: 10px; background: #0078d4; color: #fff; font-size: 13px; text-align: center; }
```
